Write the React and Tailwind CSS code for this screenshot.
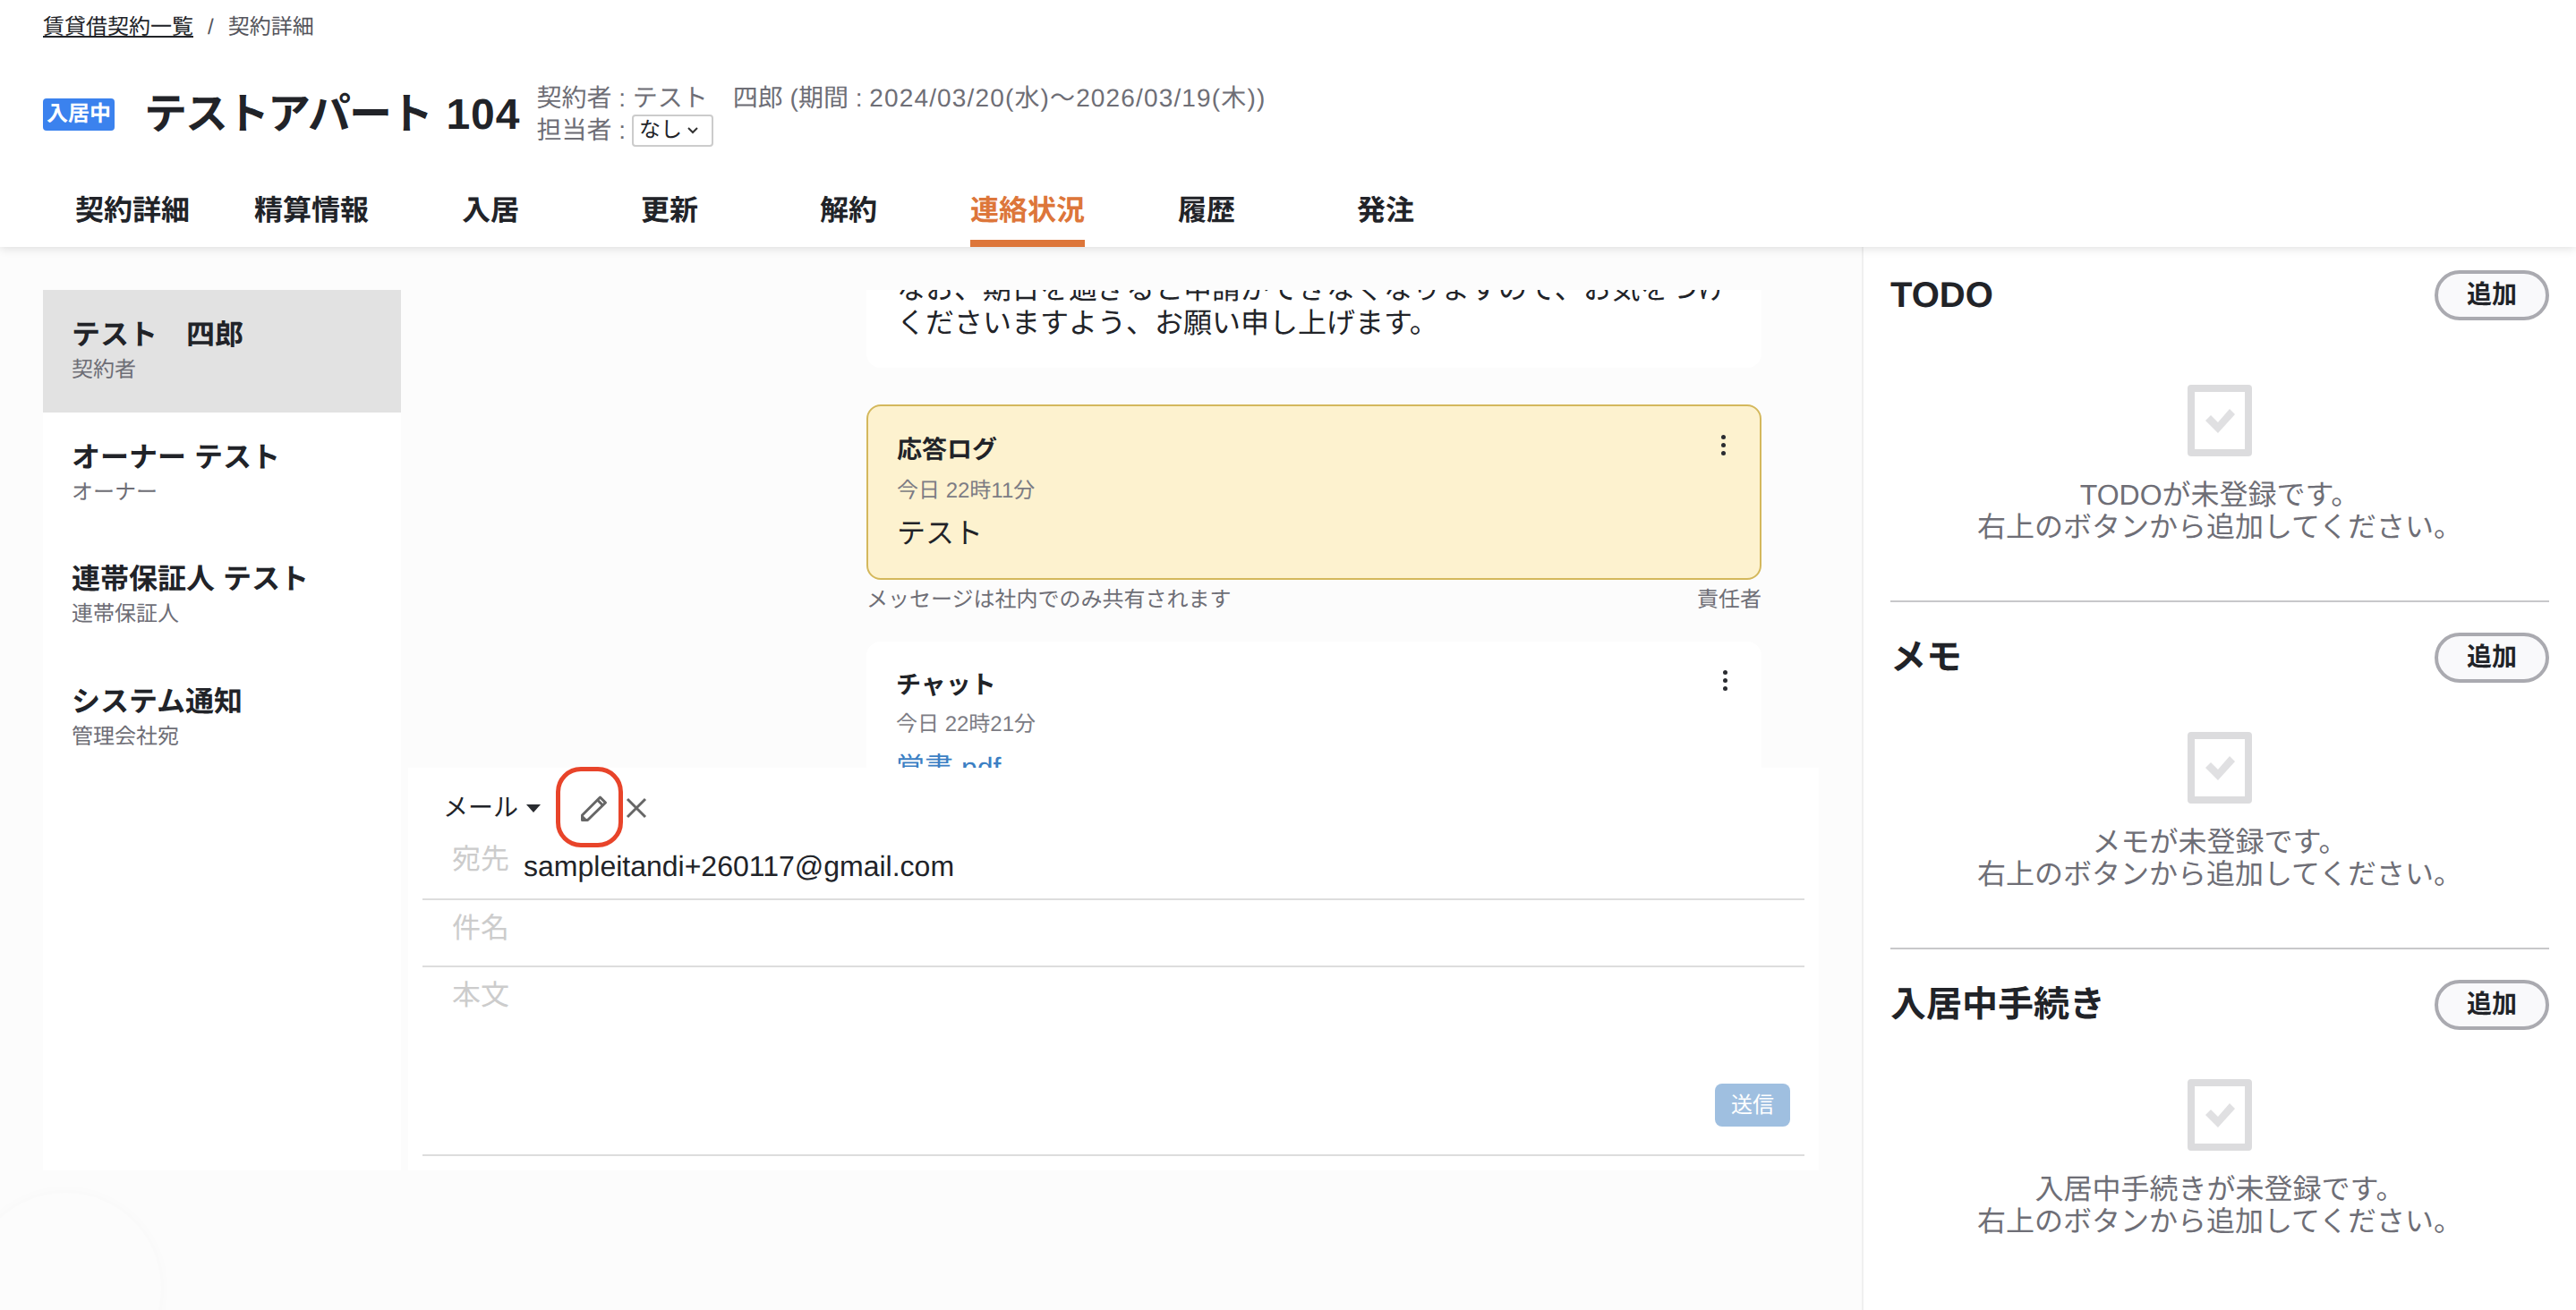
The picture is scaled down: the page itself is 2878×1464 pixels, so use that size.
import React from "react";

const tabs = ["契約詳細", "精算情報", "入居", "更新", "解約", "連絡状況", "履歴", "発注"];

const people = [
  { name: "テスト　四郎", role: "契約者", active: true },
  { name: "オーナー テスト", role: "オーナー" },
  { name: "連帯保証人 テスト", role: "連帯保証人" },
  { name: "システム通知", role: "管理会社宛" },
];

function Dots() {
  return (
    <div className="flex flex-col gap-[4px]">
      <span className="w-[5px] h-[5px] rounded-full bg-[#2a2c31]"></span>
      <span className="w-[5px] h-[5px] rounded-full bg-[#2a2c31]"></span>
      <span className="w-[5px] h-[5px] rounded-full bg-[#2a2c31]"></span>
    </div>
  );
}

function Section({ title, empty, first, last }) {
  return (
    <div className={`${first ? "pt-[26px] h-[397px] border-b-2 border-[#c8c8ca]" : "pt-[34px]"} ${!first && !last ? "h-[388px] border-b-2 border-[#c8c8ca]" : ""}`}>
      <div className="flex justify-between items-center h-[56px]">
        <h2 className="text-[40px] font-bold leading-none text-[#212328]">{title}</h2>
        <button className="w-[128px] h-[56px] rounded-full border-[4px] border-[#aaaab0] bg-[#f9f9fb] text-[28px] font-bold text-[#212328]">追加</button>
      </div>
      <div className={`${first ? "mt-[72px]" : "mt-[55px]"} flex flex-col items-center`}>
        <div className="w-[72px] h-[80px] rounded-[4px] border-[8px] border-[#dcdcde] flex items-center justify-center">
          <svg width="38" height="30" viewBox="0 0 38 30">
            <path d="M3 15l6-6 8 8L30 2l6 6-19 21z" fill="#e0e0e2" />
          </svg>
        </div>
        <p className="mt-[25px] text-[32px] leading-[36px] text-center text-[#6e6e76]">
          {empty}
          <br />
          右上のボタンから追加してください。
        </p>
      </div>
    </div>
  );
}

export default function App() {
  return (
    <div className="relative w-[2878px] h-[1464px] overflow-hidden bg-[#fcfcfc] text-[#212328] [text-rendering:geometricPrecision] font-['Liberation_Sans','Noto_Sans_CJK_JP',sans-serif]">
      {/* header */}
      <header className="relative z-10 h-[276px] bg-white px-[48px] shadow-[0_2px_10px_rgba(0,0,0,0.12)]">
        <div className="flex items-center h-[61px] text-[24px] text-[#55555c]">
          <a className="underline text-[#212328]">賃貸借契約一覧</a>
          <span className="mx-[16px]">/</span>
          <span>契約詳細</span>
        </div>
        <div className="flex items-center mt-[31px] h-[72px]">
          <span className="bg-[#3b82ee] text-white text-[24px] font-bold leading-[36px] px-[4px] rounded-[4px]">入居中</span>
          <h1 className="ml-[33px] text-[48px] font-bold leading-none whitespace-nowrap mt-[1px]">
            <span className="tracking-[-2px]">テストアパート</span> <span className="ml-[3px] tracking-[1px]">104</span>
          </h1>
          <div className="ml-[18px] text-[28px] leading-[36px] text-[#6e6e76] whitespace-nowrap">
            <div>契約者 : テスト　四郎 (期間 : <span className="tracking-[1.15px]">2024/03/20(水)〜2026/03/19(木))</span></div>
            <div className="flex items-center">
              担当者 :
              <div className="ml-[7px] flex items-center gap-[6px] w-[91px] h-[36px] pl-[6px] border-2 border-[#cccccc] rounded-[4px] bg-white text-[24px] text-[#212328]">
                なし
                <svg width="12" height="8" viewBox="0 0 12 8" fill="none" stroke="#333" strokeWidth="2"><path d="M1 1l5 5 5-5" /></svg>
              </div>
            </div>
          </div>
        </div>
        <nav className="flex mt-[36px]">
          {tabs.map((t) => (
            <div key={t} className="w-[200px] h-[76px] flex justify-center">
              <span className={`h-[76px] pt-[16px] text-[32px] leading-[38px] font-bold ${t === "連絡状況" ? "text-[#dd763a] border-b-[8px] border-[#dd763a]" : ""}`}>{t}</span>
            </div>
          ))}
        </nav>
      </header>

      <div className="flex h-[1188px]">
        {/* contact list */}
        <div className="w-[456px] shrink-0 pl-[48px] pt-[48px]">
          <div className="w-[400px] h-[984px] bg-white">
            {people.map((p) => (
              <div key={p.role} className={`h-[136.5px] pl-[32px] pt-[29px] ${p.active ? "bg-[#e2e2e2]" : ""}`}>
                <div className="text-[32px] font-bold leading-[42px]">{p.name}</div>
                <div className="mt-[3px] text-[24px] leading-[32px] text-[#6e6e76]">{p.role}</div>
              </div>
            ))}
          </div>
        </div>

        {/* messages and composer */}
        <div className="w-[1576px] shrink-0 pt-[48px]">
          <div className="h-[534px] overflow-hidden pl-[512px]">
            <div className="w-[1000px] -mt-[20px] h-[107px] bg-white rounded-[16px] px-[34px] text-[32px] leading-[38px] whitespace-nowrap">
              なお、期日を過ぎると申請ができなくなりますので、お気をつけ
              <br />
              くださいますよう、お願い申し上げます。
            </div>
            <div className="w-[1000px] h-[196px] mt-[41px] rounded-[16px] border-2 border-[#d4b85c] bg-[#fdf2cf] px-[32px] pt-[31px] relative">
              <div className="text-[28px] font-bold leading-[36px]">応答ログ</div>
              <div className="absolute right-[38px] top-[32px]"><Dots /></div>
              <div className="mt-[12px] text-[24px] leading-[32px] text-[#7c7c84]">今日 22時11分</div>
              <div className="mt-[11px] text-[32px] leading-[40px]">テスト</div>
            </div>
            <div className="w-[1000px] flex justify-between mt-[8px] text-[24px] leading-[30px] text-[#6e6e76]">
              <span>メッセージは社内でのみ共有されます</span>
              <span>責任者</span>
            </div>
            <div className="w-[1000px] h-[200px] mt-[31px] rounded-[16px] bg-white px-[33px] pt-[31px] relative">
              <div className="text-[28px] font-bold leading-[36px]">チャット</div>
              <div className="absolute right-[38px] top-[32px]"><Dots /></div>
              <div className="mt-[10px] text-[24px] leading-[32px] text-[#7c7c84]">今日 22時21分</div>
              <div className="mt-[12px] text-[32px] leading-[40px] text-[#3b7fc4]">覚書.pdf</div>
            </div>
          </div>

          <div className="h-[450px] bg-white px-[16px] relative">
            <div className="flex items-center h-[90px] pl-[23px]">
              <span className="text-[28px] leading-none">メール</span>
              <svg className="ml-[9px]" width="16" height="9" viewBox="0 0 16 9"><path d="M0 0h16l-8 9z" fill="#2a2c31" /></svg>
              <svg className="ml-[45px]" width="30" height="30" viewBox="0 0 30 30" fill="none" stroke="#666" strokeWidth="3" strokeLinejoin="round">
                <path d="M1.5 28.5V23L21.5 3l6 6-20 19.5z" />
                <path d="M18.5 6l6 6" />
                <path d="M1 29v-7l7 7z" fill="#666" stroke="none" />
              </svg>
              <svg className="ml-[20px]" width="24" height="24" viewBox="0 0 24 24" fill="none" stroke="#666" strokeWidth="3"><path d="M2 2l20 20M22 2L2 22" /></svg>
            </div>
            {/* annotation round the pencil */}
            <div className="absolute left-[165px] top-[-1px] w-[75px] h-[90px] rounded-[28px] border-[5px] border-[#e8442a]"></div>

            <div className="h-[58px] border-b-2 border-[#dddddd] flex pl-[33px]">
              <span className="text-[32px] leading-[40px] -mt-[8px] text-[#cccccc]">宛先</span>
              <span className="ml-[16px] text-[32px] leading-[40px]">sampleitandi+260117@gmail.com</span>
            </div>
            <div className="h-[75px] border-b-2 border-[#dddddd] pl-[33px] pt-[11px]">
              <span className="text-[32px] leading-[40px] text-[#cccccc]">件名</span>
            </div>
            <div className="h-[211px] border-b-2 border-[#dddddd] pl-[33px] pr-[16px] pt-[11px] relative">
              <span className="text-[32px] leading-[40px] text-[#cccccc]">本文</span>
              <button className="absolute right-[16px] top-[130px] w-[84px] h-[48px] rounded-[8px] bg-[#9fbfe0] text-white text-[24px]">送信</button>
            </div>
          </div>
        </div>

        {/* side panel */}
        <aside className="ml-[48px] flex-1 bg-white pl-[30px] pr-[30px] border-l-2 border-[#f0f0f0]">
          <Section first title="TODO" empty="TODOが未登録です。" />
          <Section title="メモ" empty="メモが未登録です。" />
          <Section last title="入居中手続き" empty="入居中手続きが未登録です。" />
        </aside>
      </div>

      {/* faint round button, bottom left */}
      <div className="absolute left-[-34px] top-[1333px] w-[214px] h-[214px] rounded-full bg-[#fcfcfc] shadow-[0_0_16px_rgba(0,0,0,0.025)]"></div>
    </div>
  );
}
